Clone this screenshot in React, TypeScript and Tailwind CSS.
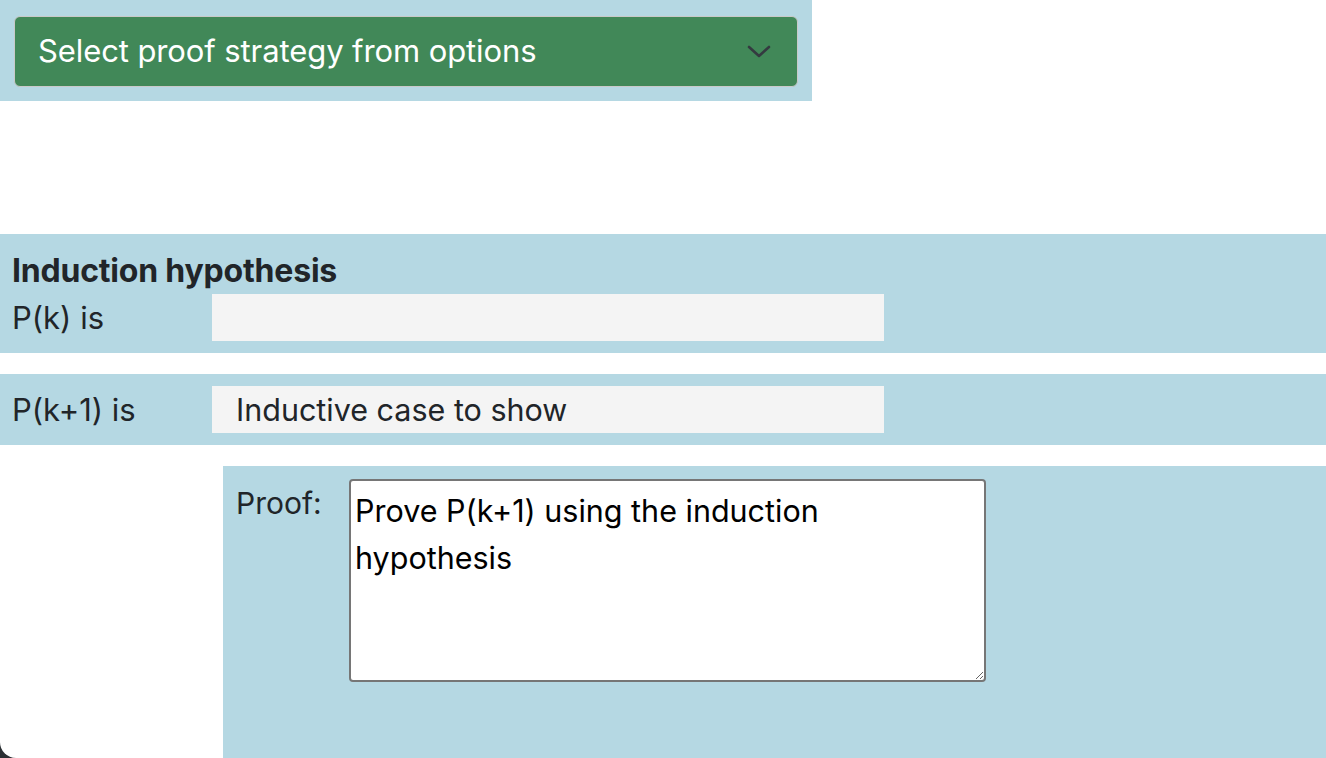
export default function App() {
  return (
    <div className="h-[758px] w-[1326px] overflow-hidden bg-[#2b2f33] font-['Inter','Liberation_Sans',sans-serif] text-[#212529]">
      <div className="h-full w-full rounded-bl-[16px] bg-white">
        {/* strategy picker */}
        <div className="h-[101px] w-[812px] bg-[#b5d8e3] pl-[14px] pt-[16px]">
          <button className="flex h-[71px] w-[784px] items-center justify-between rounded-[6px] border border-[#c9c9c9] bg-[#418858] pl-[23px] pr-[26px] text-[31px] tracking-[-0.1px] text-white">
            <span>Select proof strategy from options</span>
            <svg width="24" height="14" viewBox="0 0 24 14" fill="none">
              <path d="M2 2 L12 11 L22 2" stroke="#343a40" strokeWidth="2.6" strokeLinecap="round" strokeLinejoin="round" />
            </svg>
          </button>
        </div>

        {/* induction hypothesis */}
        <div className="mt-[133px] h-[119px] bg-[#b5d8e3] pl-[12px] pt-[19px]">
          <div className="text-[32px] font-bold leading-[36px] tracking-[-0.2px]">Induction hypothesis</div>
          <div className="mt-[5px] flex items-center">
            <div className="w-[200px] text-[31px] leading-[36px]">P(k) is</div>
            <div className="h-[47px] w-[672px] bg-[#f4f4f4]" />
          </div>
        </div>

        {/* inductive case */}
        <div className="mt-[21px] flex h-[71px] items-center bg-[#b5d8e3] pl-[12px]">
          <div className="w-[200px] text-[31px] leading-[36px]">P(k+1) is</div>
          <div className="flex h-[47px] w-[672px] items-center bg-[#f4f4f4] pl-[24px] text-[30.5px]">Inductive case to show</div>
        </div>

        {/* proof */}
        <div className="ml-[223px] mt-[21px] flex h-[292px] items-start bg-[#b5d8e3] pl-[13px] pt-[13px]">
          <div className="w-[113px] pt-[6px] text-[30px] leading-[36px]">Proof:</div>
          <textarea
            className="h-[203px] w-[637px] resize rounded-[4px] border-2 border-[#767676] bg-white pl-[4px] pr-[60px] pt-[6px] text-[30.5px] leading-[47px] text-black outline-none"
            defaultValue="Prove P(k+1) using the induction hypothesis"
          />
        </div>
      </div>
    </div>
  );
}
